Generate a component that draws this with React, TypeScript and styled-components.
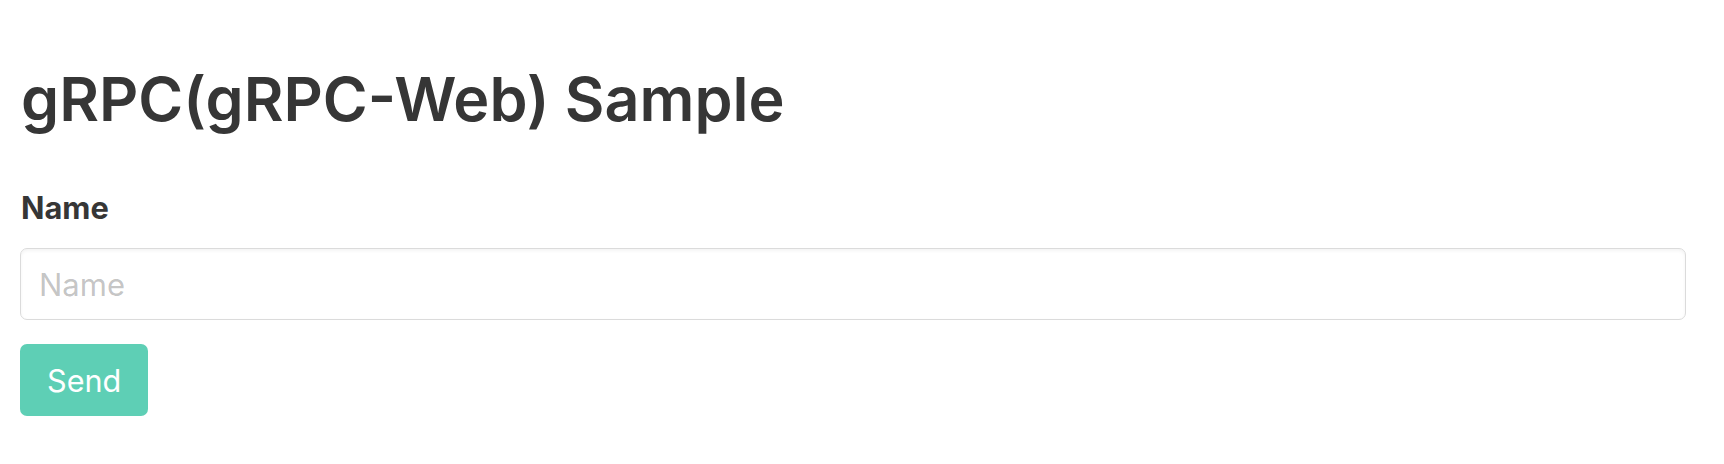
import React from "react";
import styled, { createGlobalStyle } from "styled-components";

const Global = createGlobalStyle`
  html, body { margin: 0; padding: 0; background: #ffffff; }
  body { font-family: Inter, "Noto Sans", sans-serif; color: #363636; }
  * { box-sizing: border-box; }
`;

const Page = styled.main`
  padding: 67px 38px 0 20px;
`;

const Title = styled.h1`
  margin: 0 0 54px 0;
  font-size: 61px;
  line-height: 64.8px;
  font-weight: 600;
  color: #363636;
  padding-left: 1px;
`;

const Field = styled.div`
  display: flex;
  flex-direction: column;
`;

const Label = styled.label`
  font-size: 30.8px;
  line-height: 43.2px;
  font-weight: 700;
  color: #363636;
  margin-bottom: 19px;
  padding-left: 1px;
`;

const Input = styled.input`
  height: 72px;
  width: 100%;
  border: 1px solid #dbdbdb;
  border-radius: 7px;
  box-shadow: inset 0 1.8px 3.6px rgba(10, 10, 10, 0.05);
  padding: 0 18px;
  font-family: inherit;
  font-size: 31px;
  color: #363636;
  outline: none;
  &::placeholder {
    color: rgba(54, 54, 54, 0.3);
  }
`;

const Actions = styled.div`
  display: flex;
  margin-top: 24px;
`;

const Button = styled.button`
  height: 72px;
  padding: 0 27px;
  border: none;
  border-radius: 7px;
  background: #5ecfb5;
  color: #ffffff;
  font-family: inherit;
  font-size: 30.6px;
  font-weight: 400;
  cursor: pointer;
`;

export default function App() {
  return (
    <>
      <Global />
      <Page>
        <Title>gRPC(gRPC-Web) Sample</Title>
        <Field>
          <Label htmlFor="name">Name</Label>
          <Input id="name" placeholder="Name" />
        </Field>
        <Actions>
          <Button>Send</Button>
        </Actions>
      </Page>
    </>
  );
}
